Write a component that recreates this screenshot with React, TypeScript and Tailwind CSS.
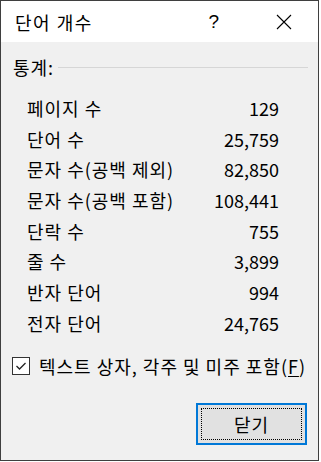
const stats: Array<[string, string]> = [
  ["페이지 수", "129"],
  ["단어 수", "25,759"],
  ["문자 수(공백 제외)", "82,850"],
  ["문자 수(공백 포함)", "108,441"],
  ["단락 수", "755"],
  ["줄 수", "3,899"],
  ["반자 단어", "994"],
  ["전자 단어", "24,765"],
];

export default function App() {
  return (
    <div
      className="h-[462px] w-[321px] bg-white text-black"
      style={{ fontFamily: '"Noto Sans CJK KR", "Noto Sans", sans-serif' }}
    >
      <div className="flex h-[461px] w-[319px] flex-col border border-[#3f3f3f] bg-[#f0f0f0]">
        {/* title bar */}
        <div className="flex h-[41px] items-center bg-white pl-[14px]">
          <span className="flex-1 text-[18px] leading-none tracking-[1.5px]">단어 개수</span>
          <span className="mr-[57px] text-[19px] leading-none" style={{ fontFamily: '"Liberation Sans", sans-serif' }}>
            ?
          </span>
          <svg width="16" height="16" viewBox="0 0 16 16" className="mr-[26px]">
            <path d="M1 1 L15 15 M15 1 L1 15" stroke="#000" strokeWidth="1.1" fill="none" />
          </svg>
        </div>

        <div className="mt-[13px] flex h-[24px] items-center pl-[12px] pr-[10px]">
          <span className="text-[18px] leading-none tracking-[1px]">통계:</span>
          <div className="ml-[4px] h-px flex-1 bg-[#d6d6d6]" />
        </div>

        <div className="mt-[13.6px] flex flex-col">
          {stats.map(([label, value]) => (
            <div key={label} className="flex h-[30.7px] items-center justify-between pl-[26px] pr-[39px] text-[18px] leading-none">
              <span className="tracking-[1px]">{label}</span>
              <span>{value}</span>
            </div>
          ))}
        </div>

        <div className="mt-[16px] flex h-[24px] items-center pl-[11px]">
          <div className="flex h-[18px] w-[18px] items-center justify-center border border-[#333] bg-white">
            <svg width="12" height="10" viewBox="0 0 12 10">
              <path d="M1.5 5 L4.5 8 L10.5 2" stroke="#222" strokeWidth="1.3" fill="none" />
            </svg>
          </div>
          <span className="ml-[9px] text-[18px] leading-none tracking-[1px]">
            텍스트 상자, 각주 및 미주 포함(<span className="underline underline-offset-2">F</span>)
          </span>
        </div>

        <div className="mt-[25px] flex justify-end pr-[11px]">
          <button className="relative flex h-[42px] w-[111px] items-center justify-center border-2 border-[#0078d7] bg-[#e1e1e1] text-[18px] leading-none">
            <div className="absolute inset-[3px] border border-dotted border-black" />
            <span className="tracking-[1px]">닫기</span>
          </button>
        </div>
      </div>
    </div>
  );
}
